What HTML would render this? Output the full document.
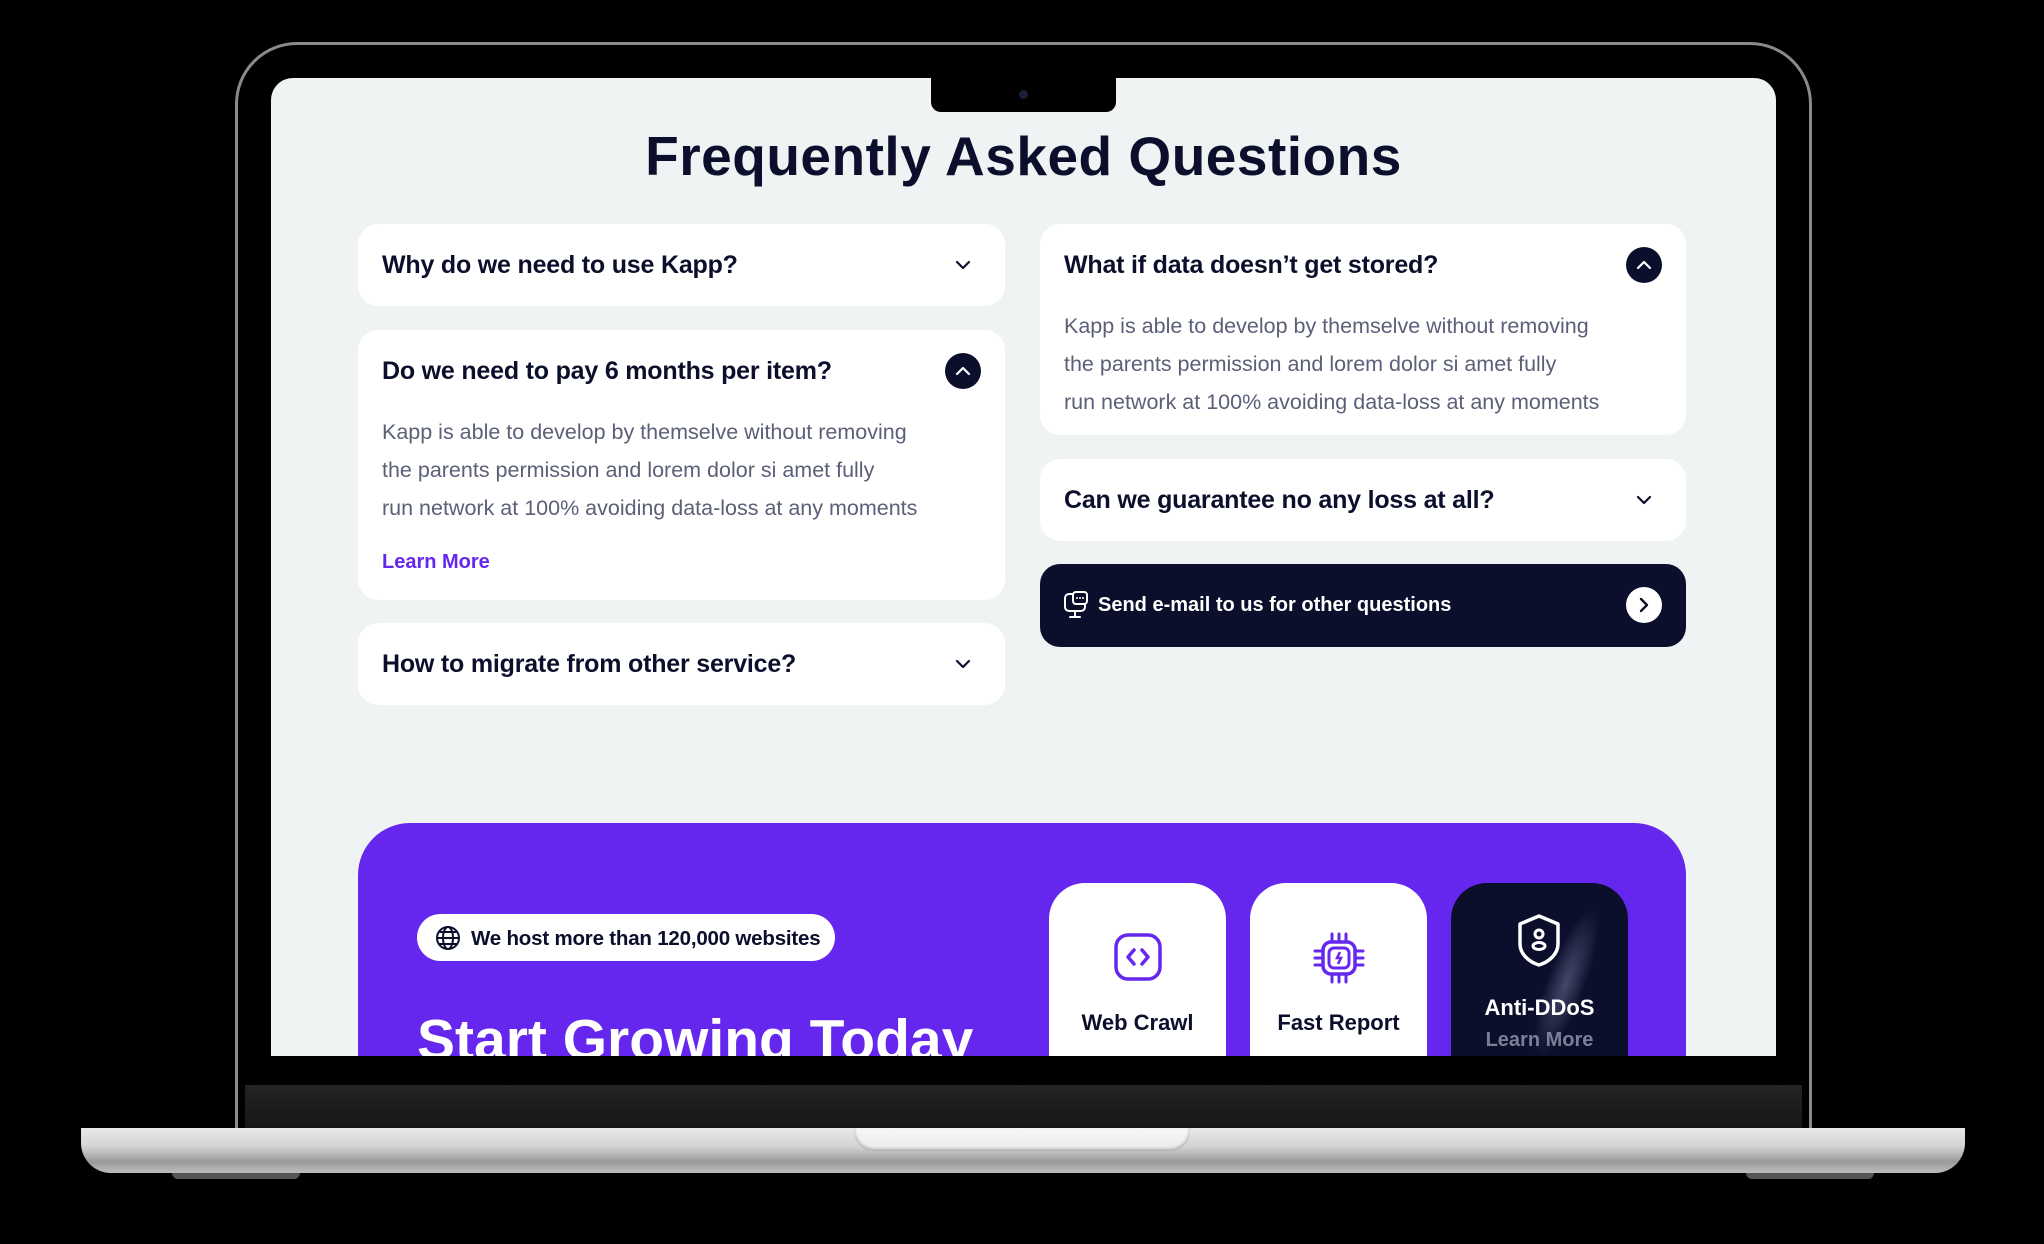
<!DOCTYPE html>
<html><head><meta charset="utf-8"><style>
*{margin:0;padding:0;box-sizing:border-box}
body{width:2044px;height:1244px;background:#000;position:relative;overflow:hidden;font-family:"Liberation Sans",sans-serif}
.a{position:absolute}
.frame{left:235px;top:42px;width:1577px;height:1100px;border-radius:62px 62px 0 0;border:3px solid #8a8a8a;background:#000}
.screen{left:271px;top:78px;width:1505px;height:978px;background:#eff3f3;border-radius:22px 22px 0 0;overflow:hidden}
.card{position:absolute;background:#fff;border-radius:20px}
.q{position:absolute;left:24px;font-weight:700;font-size:25px;color:#0b0f2b;letter-spacing:-0.2px}
.p{position:absolute;left:24px;font-size:21.5px;color:#5b5f78;line-height:38px}
.chev{position:absolute;width:36px;height:36px}
.fc{position:absolute;top:805px;width:177px;height:220px;border-radius:36px;background:#fff;text-align:center}
.fl{position:absolute;left:0;right:0;font-weight:700;font-size:22px;color:#0b0f2b}
</style></head><body>
<div class="a frame"></div>
<div class="a screen">
  <div class="a" style="left:660px;top:0;width:185px;height:34px;background:#000;border-radius:0 0 10px 10px"></div>
  <div class="a" style="left:748px;top:12px;width:9px;height:9px;border-radius:50%;background:#1a1f3a"></div>
  <div class="a" style="left:0;width:1505px;top:46px;text-align:center;font-weight:700;font-size:55px;color:#0b0f2b;letter-spacing:0.5px">Frequently Asked Questions</div>

  <div class="card" style="left:87px;top:146px;width:647px;height:82px">
    <div class="q" style="top:27px">Why do we need to use Kapp?</div>
    <svg class="chev" style="left:587px;top:23px" viewBox="0 0 36 36"><path d="M12 15l6 6 6-6" fill="none" stroke="#0b0f2b" stroke-width="2.2" stroke-linecap="round" stroke-linejoin="round"/></svg>
  </div>
  <div class="card" style="left:87px;top:252px;width:647px;height:270px">
    <div class="q" style="top:27px">Do we need to pay 6 months per item?</div>
    <svg class="chev" style="left:587px;top:23px" viewBox="0 0 36 36"><circle cx="18" cy="18" r="18" fill="#0b0f2b"/><path d="M12 21l6-6 6 6" fill="none" stroke="#fff" stroke-width="2.2" stroke-linecap="round" stroke-linejoin="round"/></svg>
    <div class="p" style="top:83px">Kapp is able to develop by themselve without removing<br>the parents permission and lorem dolor si amet fully<br>run network at 100% avoiding data-loss at any moments</div>
    <div class="a" style="left:24px;top:221px;font-size:20px;font-weight:700;color:#6527ee">Learn More</div>
  </div>
  <div class="card" style="left:87px;top:545px;width:647px;height:82px">
    <div class="q" style="top:27px">How to migrate from other service?</div>
    <svg class="chev" style="left:587px;top:23px" viewBox="0 0 36 36"><path d="M12 15l6 6 6-6" fill="none" stroke="#0b0f2b" stroke-width="2.2" stroke-linecap="round" stroke-linejoin="round"/></svg>
  </div>

  <div class="card" style="left:769px;top:146px;width:646px;height:211px">
    <div class="q" style="top:27px">What if data doesn’t get stored?</div>
    <svg class="chev" style="left:586px;top:23px" viewBox="0 0 36 36"><circle cx="18" cy="18" r="18" fill="#0b0f2b"/><path d="M12 21l6-6 6 6" fill="none" stroke="#fff" stroke-width="2.2" stroke-linecap="round" stroke-linejoin="round"/></svg>
    <div class="p" style="top:83px">Kapp is able to develop by themselve without removing<br>the parents permission and lorem dolor si amet fully<br>run network at 100% avoiding data-loss at any moments</div>
  </div>
  <div class="card" style="left:769px;top:381px;width:646px;height:82px">
    <div class="q" style="top:27px">Can we guarantee no any loss at all?</div>
    <svg class="chev" style="left:586px;top:23px" viewBox="0 0 36 36"><path d="M12 15l6 6 6-6" fill="none" stroke="#0b0f2b" stroke-width="2.2" stroke-linecap="round" stroke-linejoin="round"/></svg>
  </div>
  <div class="card" style="left:769px;top:486px;width:646px;height:83px;background:#0b0f2b">
    <svg class="a" style="left:22px;top:27px" width="28" height="30" viewBox="0 0 28 30"><rect x="3" y="3" width="20" height="17" rx="4" fill="none" stroke="#fff" stroke-width="2"/><rect x="11" y="1" width="14" height="12" rx="3" fill="#0b0f2b" stroke="#fff" stroke-width="2"/><circle cx="15" cy="7" r="1" fill="#fff"/><circle cx="18" cy="7" r="1" fill="#fff"/><circle cx="21" cy="7" r="1" fill="#fff"/><path d="M13 20v5M8 26h10" stroke="#fff" stroke-width="2" stroke-linecap="round"/></svg>
    <div class="a" style="left:58px;top:30px;font-size:20px;font-weight:700;color:#fff">Send e-mail to us for other questions</div>
    <svg class="chev" style="left:586px;top:23px" viewBox="0 0 36 36"><circle cx="18" cy="18" r="18" fill="#fff"/><path d="M15 12l6 6-6 6" fill="none" stroke="#0b0f2b" stroke-width="2.4" stroke-linecap="round" stroke-linejoin="round"/></svg>
  </div>

  <div class="a" style="left:87px;top:745px;width:1328px;height:300px;background:#6527ee;border-radius:52px 52px 0 0">
    <div class="a" style="left:59px;top:91px;width:418px;height:47px;background:#fff;border-radius:24px">
      <svg class="a" style="left:18px;top:11px" width="26" height="26" viewBox="0 0 26 26"><g fill="none" stroke="#0b0f2b" stroke-width="2"><circle cx="13" cy="13" r="11"/><ellipse cx="13" cy="13" rx="5" ry="11"/><path d="M2 13h22M4 7h18M4 19h18"/></g></svg>
      <div class="a" style="left:54px;top:13px;font-size:20.5px;font-weight:700;color:#0b0f2b;letter-spacing:-0.2px">We host more than 120,000 websites</div>
    </div>
    <div class="a" style="left:59px;top:184px;font-size:57px;font-weight:700;color:#fff;letter-spacing:0px;white-space:nowrap">Start Growing Today</div>
  </div>
  <div class="fc" style="left:778px">
    <svg class="a" style="left:63px;top:48px" width="52" height="52" viewBox="0 0 52 52"><rect x="4" y="4" width="44" height="44" rx="12" fill="none" stroke="#6527ee" stroke-width="3.5"/><path d="M22 19l-6 7 6 7M30 19l6 7-6 7" fill="none" stroke="#6527ee" stroke-width="3.5" stroke-linecap="round" stroke-linejoin="round"/></svg>
    <div class="fl" style="top:127px">Web Crawl</div>
  </div>
  <div class="fc" style="left:979px">
    <svg class="a" style="left:62px;top:48px" width="54" height="54" viewBox="0 0 54 54"><rect x="11" y="11" width="32" height="32" rx="8" fill="none" stroke="#6527ee" stroke-width="3.5"/><rect x="17" y="17" width="20" height="20" rx="5" fill="none" stroke="#6527ee" stroke-width="3"/><path d="M28 21l-3 6h4l-3 6" fill="none" stroke="#6527ee" stroke-width="2.5"/><path d="M20 3v8M27 3v8M34 3v8M20 43v8M27 43v8M34 43v8M3 20h8M3 27h8M3 34h8M43 20h8M43 27h8M43 34h8" stroke="#6527ee" stroke-width="3" stroke-linecap="round"/></svg>
    <div class="fl" style="top:127px">Fast Report</div>
  </div>
  <div class="fc" style="left:1180px;background:#0b0f2b;overflow:hidden">
    <div class="a" style="left:95px;top:20px;width:40px;height:160px;background:radial-gradient(ellipse,rgba(140,140,180,.45),transparent 70%);transform:rotate(20deg)"></div>
    <svg class="a" style="left:64px;top:30px" width="48" height="54" viewBox="0 0 48 54"><path d="M24 3l19 8v20c0 10-9 18-19 21C14 49 5 41 5 31V11z" fill="none" stroke="#fff" stroke-width="3.5" stroke-linejoin="round"/><circle cx="24" cy="21" r="4" fill="none" stroke="#fff" stroke-width="3"/><ellipse cx="24" cy="33" rx="6" ry="3.5" fill="none" stroke="#fff" stroke-width="3"/></svg>
    <div class="fl" style="top:112px;color:#fff">Anti-DDoS</div>
    <div class="a" style="left:0;right:0;top:146px;font-size:20px;font-weight:700;color:#7b7f96">Learn More</div>
  </div>
</div>
<div class="a" style="left:245px;top:1056px;width:1557px;height:29px;background:#000"></div>
<div class="a" style="left:245px;top:1085px;width:1557px;height:43px;background:linear-gradient(#242424,#161616)"></div>
<div class="a" style="left:81px;top:1128px;width:1884px;height:45px;border-radius:0 0 30px 30px;background:linear-gradient(#e8e8e8,#d4d4d4 40%,#9a9a9a 75%,#bdbdbd)"></div>
<div class="a" style="left:854px;top:1128px;width:336px;height:23px;border-radius:0 0 20px 20px;background:linear-gradient(#f6f6f6,#ececec);box-shadow:inset 0 -2px 3px #aaa"></div>
<div class="a" style="left:172px;top:1173px;width:128px;height:6px;background:#555;border-radius:0 0 6px 6px"></div>
<div class="a" style="left:1746px;top:1173px;width:128px;height:6px;background:#555;border-radius:0 0 6px 6px"></div>
</body></html>
